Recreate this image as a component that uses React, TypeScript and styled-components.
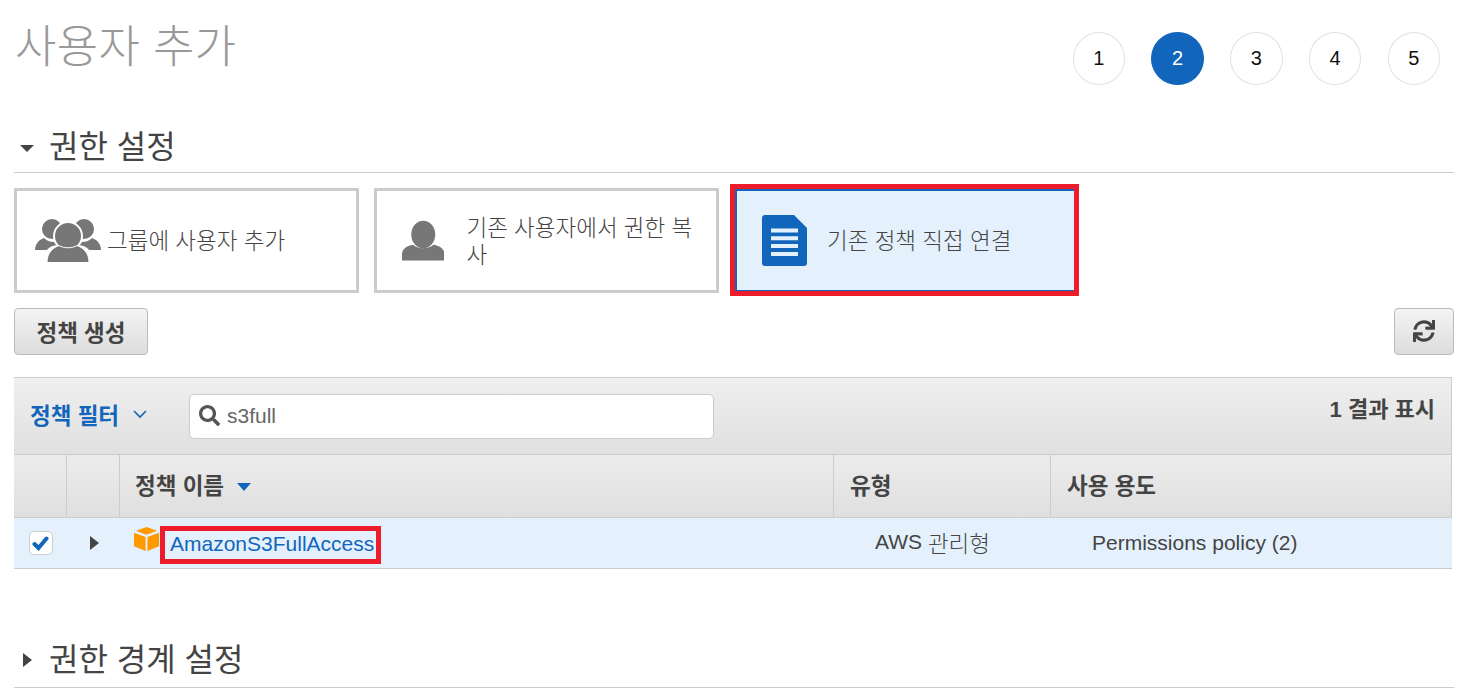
import React from "react";
import styled, { createGlobalStyle } from "styled-components";
import { FaSync, FaSearch } from "react-icons/fa";

const Global = createGlobalStyle`
  html, body { margin: 0; padding: 0; background: #fff; overflow: hidden; }
  * { box-sizing: border-box; }
  body { font-family: "Liberation Sans", "Noto Sans CJK KR", sans-serif; color: #444; }
`;

const Page = styled.div`
  width: 1459px;
  height: 693px;
  padding: 0 5px 0 14px;
  overflow: hidden;
`;
const Top = styled.header`
  display: flex;
  justify-content: space-between;
  height: 125px;
`;
const Title = styled.h1`
  margin: 20px 0 0 1px;
  font-size: 45px;
  line-height: 56px;
  font-weight: 300;
  color: #999;
  letter-spacing: 0.3px;
`;
const Steps = styled.ol`
  list-style: none;
  display: flex;
  gap: 26.25px;
  margin: 32px 14px 0 0;
  padding: 0;
`;
const Step = styled.li<{ $active?: boolean }>`
  width: 52.5px;
  height: 53px;
  border-radius: 50%;
  display: flex;
  align-items: center;
  justify-content: center;
  font-size: 20px;
  border: 1px solid ${(p) => (p.$active ? "#1166bb" : "#e1e1e1")};
  background: ${(p) => (p.$active ? "#1166bb" : "#fff")};
  color: ${(p) => (p.$active ? "#fff" : "#111")};
`;
const SectionHead = styled.div`
  display: flex;
  align-items: center;
  height: 48px;
  border-bottom: 1px solid #ccc;
  font-size: 32px;
  font-weight: 400;
  color: #444;
  padding-left: 6px;
  padding-bottom: 4px;
`;
const CaretSlot = styled.span`
  width: 29px;
  display: flex;
  justify-content: flex-start;
  flex: none;
`;
const SectionText = styled.span`
  line-height: 40px;
`;
const CaretDown = styled.i`
  width: 0;
  height: 0;
  margin-top: 4px;
  border-left: 7.5px solid transparent;
  border-right: 7.5px solid transparent;
  border-top: 7px solid #444;
`;
const CaretRight = styled.i<{ $indent?: number }>`
  width: 0;
  height: 0;
  margin-left: ${(p) => p.$indent ?? 0}px;
  border-top: 7.5px solid transparent;
  border-bottom: 7.5px solid transparent;
  border-left: 9px solid #444;
`;
const Cards = styled.div`
  display: flex;
  align-items: flex-start;
  gap: 15px;
  margin-top: 15px;
`;
const Card = styled.div<{ $pad: number; $gap: number }>`
  width: 345px;
  height: 105px;
  display: flex;
  align-items: center;
  gap: ${(p) => p.$gap}px;
  padding-left: ${(p) => p.$pad}px;
  padding-right: 22px;
  border: 3px solid #ccc;
  background: #fff;
  font-size: 22.5px;
  line-height: 27px;
  color: #444;
  flex: none;
`;
const SelectedCard = styled(Card)`
  width: 339px;
  height: 102px;
  margin: 1px 0 0 1px;
  background: #e4f1fd;
  border-style: solid;
  border-color: #1166bb;
  border-width: 2px 0 1.5px 2px;
  outline: 5px solid #ed1c2a;
`;
const CardText = styled.span`
  font-weight: 300;
  margin-top: 2px;
`;
const ActionRow = styled.div`
  display: flex;
  justify-content: space-between;
  margin-top: 15px;
`;
const Button = styled.button<{ $width: number }>`
  width: ${(p) => p.$width}px;
  height: 47px;
  border: 1px solid #bbb;
  border-radius: 4px;
  background: linear-gradient(#f4f4f4, #dcdcdc);
  font-family: inherit;
  font-size: 22.5px;
  font-weight: 700;
  color: #444;
  display: flex;
  align-items: center;
  justify-content: center;
  padding: 0 0 2px;
`;
const Table = styled.section`
  margin-top: 22px;
  width: 1438px;
  border-top: 1px solid #ccc;
`;
const FilterBar = styled.div`
  height: 77px;
  display: flex;
  align-items: flex-start;
  background: linear-gradient(#efefef, #e0e0e0);
  border-bottom: 1px solid #ccc;
  border-right: 1px solid #ccc;
  padding: 16px 16px 0 16px;
`;
const FilterLabel = styled.div`
  display: flex;
  align-items: center;
  gap: 14px;
  width: 159px;
  height: 40px;
  font-size: 22.5px;
  font-weight: 700;
  color: #1166bb;
`;
const SearchBox = styled.div`
  width: 525px;
  height: 45px;
  background: #fff;
  border: 1px solid #ccc;
  border-radius: 5px;
  display: flex;
  align-items: center;
  gap: 7px;
  padding: 0 0 2px 9px;
  font-size: 21px;
  color: #666;
`;
const Count = styled.div`
  margin-left: auto;
  font-size: 22px;
  line-height: 32px;
  font-weight: 700;
  color: #444;
`;
const HeadRow = styled.div`
  display: grid;
  grid-template-columns: 53px 53px 714px 217px 400px;
  height: 63px;
  background: linear-gradient(#ececec, #dfdfdf);
  border-bottom: 1px solid #ccc;
  border-right: 1px solid #ccc;
`;
const HeadCell = styled.div<{ $line?: boolean; $pad?: number }>`
  display: flex;
  align-items: center;
  gap: 13px;
  padding-left: ${(p) => p.$pad ?? 16}px;
  padding-bottom: 4px;
  font-size: 22.5px;
  font-weight: 700;
  color: #444;
  border-right: ${(p) => (p.$line ? "1px solid #ccc" : "none")};
`;
const SortCaret = styled.i`
  width: 0;
  height: 0;
  margin-top: 5px;
  border-left: 7.5px solid transparent;
  border-right: 7.5px solid transparent;
  border-top: 8px solid #1166bb;
`;
const BodyRow = styled.div`
  display: grid;
  grid-template-columns: 53px 53px 714px 217px 401px;
  height: 51px;
  background: #e4f1fd;
  border-bottom: 1px solid #ccc;
  font-size: 21px;
  color: #444;
`;
const BodyCell = styled.div<{ $pad?: number; $center?: boolean }>`
  display: flex;
  align-items: center;
  white-space: pre;
  padding-left: ${(p) => p.$pad ?? 0}px;
  justify-content: ${(p) => (p.$center ? "center" : "flex-start")};
`;
const Hangul = styled.span`
  font-size: 22.5px;
  font-weight: 300;
  margin-top: -3px;
`;
const TypeText = styled.span`
  margin-top: -3px;
`;
const Check = styled.span`
  width: 24px;
  height: 24px;
  background: #fff;
  border: 1px solid #ccc;
  border-radius: 5px;
  display: flex;
  align-items: center;
  justify-content: center;
`;
const CubeWrap = styled.span`
  display: flex;
  flex: none;
  margin-top: -8px;
`;
const PolicyLink = styled.a`
  flex: none;
  margin-left: 1px;
  margin-top: 3px;
  width: 221px;
  height: 38px;
  padding-left: 10px;
  line-height: 36px;
  white-space: nowrap;
  color: #1166bb;
  outline: 5px solid #ed1c2a;
  outline-offset: -5px;
`;
const LowerSection = styled(SectionHead)`
  margin-top: 62px;
  height: 57px;
  padding-bottom: 0;
  padding-left: 9px;
  padding-top: 2px;
`;
const LowerSlot = styled(CaretSlot)`
  width: 26px;
`;

const GroupIcon = () => (
  <svg width="66" height="44" viewBox="0 0 66 44" fill="#777">
    <circle cx="17" cy="10" r="10" />
    <circle cx="49" cy="10" r="10" />
    <path d="M0 31c0-5 3-10 9-12 3 3 7 4 10 4l3 3c-5 1-8 2-10 5H0z" />
    <path d="M66 31c0-5-3-10-9-12-3 3-7 4-10 4l-3 3c5 1 8 2 10 5h12z" />
    <circle cx="33" cy="17" r="14" stroke="#fff" strokeWidth="2" />
    <path d="M12 43.500c0-8 4-14 12-17 5 3 13 3 18 0 8 3 12 9 12 17z" stroke="#fff" strokeWidth="1" />
  </svg>
);
const PersonIcon = () => (
  <svg width="46" height="44" viewBox="0 0 46 44" fill="#777">
    <ellipse cx="23" cy="15" rx="13" ry="15" />
    <path d="M0 43v-7c0-5 5-9 12-10 5 5 17 5 22 0 7 1 12 5 12 10v7z" />
  </svg>
);
const DocIcon = () => (
  <svg width="45" height="51" viewBox="0 0 45 51">
    <path d="M3 0h29l13 13v35a3 3 0 0 1-3 3H3a3 3 0 0 1-3-3V3a3 3 0 0 1 3-3z" fill="#1166bb" />
    <path d="M9 13.500h27v4H9zM9 21.200h27v4H9zM9 29h27v4H9zM9 37h27v4H9z" fill="#e4f1fd" />
  </svg>
);
const CubeIcon = () => (
  <svg width="25" height="25" viewBox="0 0 26 26">
    <path d="M13 0l11 4-11 4L2 4z" fill="#f90" />
    <path d="M0 6l12 4.500V25L0 20z" fill="#f90" />
    <path d="M26 6l-12 4.500V25l12-5z" fill="#f90" />
  </svg>
);
const Chevron = () => (
  <svg width="14" height="10" viewBox="0 0 14 10" fill="none" stroke="#1166bb" strokeWidth="1.600">
    <path d="M1 2l6 6 6-6" />
  </svg>
);
const CheckMark = () => (
  <svg width="17" height="15" viewBox="0 0 17 15" fill="none" stroke="#1166bb" strokeWidth="4" strokeLinecap="round">
    <path d="M2.500 8l4 4 8-9.500" />
  </svg>
);

export default function App() {
  return (
    <Page>
      <Global />
      <Top>
        <Title>사용자 추가</Title>
        <Steps>
          {[1, 2, 3, 4, 5].map((n) => (
            <Step key={n} $active={n === 2}>{n}</Step>
          ))}
        </Steps>
      </Top>
      <SectionHead>
        <CaretSlot><CaretDown /></CaretSlot>
        <SectionText>권한 설정</SectionText>
      </SectionHead>
      <Cards>
        <Card $pad={18} $gap={6}>
          <GroupIcon />
          <CardText>그룹에 사용자 추가</CardText>
        </Card>
        <Card $pad={25} $gap={22}>
          <PersonIcon />
          <CardText>기존 사용자에서 권한 복사</CardText>
        </Card>
        <SelectedCard $pad={25} $gap={20}>
          <DocIcon />
          <CardText>기존 정책 직접 연결</CardText>
        </SelectedCard>
      </Cards>
      <ActionRow>
        <Button $width={134}>정책 생성</Button>
        <Button $width={60}><FaSync size={22} color="#444" /></Button>
      </ActionRow>
      <Table>
        <FilterBar>
          <FilterLabel>정책 필터 <Chevron /></FilterLabel>
          <SearchBox><FaSearch size={21} color="#555" />s3full</SearchBox>
          <Count>1 결과 표시</Count>
        </FilterBar>
        <HeadRow>
          <HeadCell $line />
          <HeadCell $line />
          <HeadCell $line $pad={15}>정책 이름 <SortCaret /></HeadCell>
          <HeadCell $line>유형</HeadCell>
          <HeadCell>사용 용도</HeadCell>
        </HeadRow>
        <BodyRow>
          <BodyCell $center><Check><CheckMark /></Check></BodyCell>
          <BodyCell $center><CaretRight $indent={1} /></BodyCell>
          <BodyCell $pad={14}>
            <CubeWrap><CubeIcon /></CubeWrap>
            <PolicyLink>AmazonS3FullAccess</PolicyLink>
          </BodyCell>
          <BodyCell $pad={41}><TypeText>AWS </TypeText><Hangul>관리형</Hangul></BodyCell>
          <BodyCell $pad={41}>Permissions policy (2)</BodyCell>
        </BodyRow>
      </Table>
      <LowerSection>
        <LowerSlot><CaretRight /></LowerSlot>
        <SectionText>권한 경계 설정</SectionText>
      </LowerSection>
    </Page>
  );
}
